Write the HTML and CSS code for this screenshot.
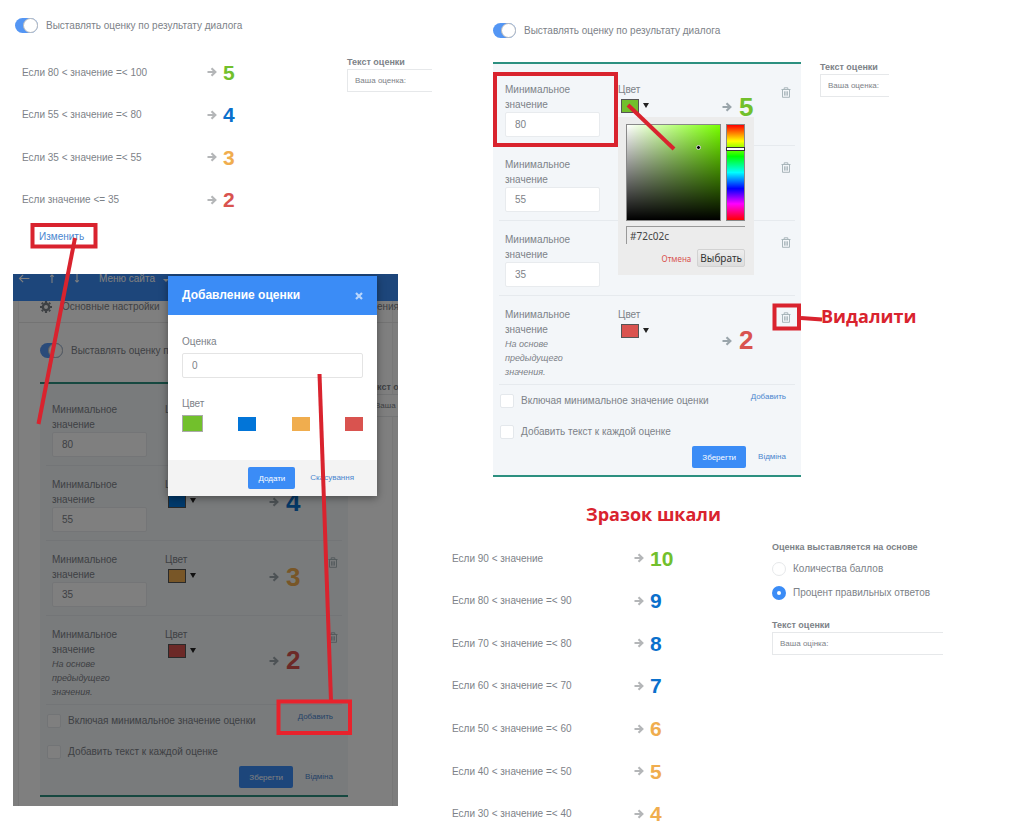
FILE: index.html
```html
<!DOCTYPE html>
<html lang="ru">
<head>
  <meta charset="UTF-8">
  <meta name="viewport" content="width=device-width, initial-scale=1.0">
  <title>Настройка шкалы оценок</title>
  <link rel="stylesheet" href="styles.css">
</head>
<body>

  <!-- Общие иконки -->
  <svg class="sprite" aria-hidden="true">
    <symbol id="arrow" viewBox="0 0 10 10">
      <path d="M0.5 5H8M4.5 1.2L8.4 5L4.5 8.8" fill="none" stroke="currentColor" stroke-width="2.1"/>
    </symbol>
    <symbol id="trash" viewBox="0 0 10 11">
      <path d="M0.5 2.5H9.5M3.2 2.2V0.8H6.8V2.2M1.5 2.5V10.3H8.5V2.5M3.6 4.3V8.6M5 4.3V8.6M6.4 4.3V8.6" fill="none" stroke="currentColor" stroke-width="1"/>
    </symbol>
  </svg>

  <main class="page">
    <div class="left">

      <!-- Текущая шкала -->
      <section class="summary">
        <div class="summary-main">
          <label class="toggle"><input type="checkbox" checked>Выставлять оценку по результату диалога</label>
          <ul class="scale">
            <li><span>Если 80 &lt; значение =&lt; 100</span><svg class="arrow"><use href="#arrow"/></svg><b class="green">5</b></li>
            <li><span>Если 55 &lt; значение =&lt; 80</span><svg class="arrow"><use href="#arrow"/></svg><b class="blue">4</b></li>
            <li><span>Если 35 &lt; значение =&lt; 55</span><svg class="arrow"><use href="#arrow"/></svg><b class="orange">3</b></li>
            <li><span>Если значение &lt;= 35</span><svg class="arrow"><use href="#arrow"/></svg><b class="red">2</b></li>
          </ul>
          <a class="change" href="#">Изменить</a>
        </div>
        <div class="field">
          <label for="text1">Текст оценки</label>
          <input type="text" id="text1" value="Ваша оценка:">
        </div>
      </section>

      <!-- Окно добавления оценки поверх затемнённой страницы -->
      <section class="shot">
        <header class="topbar">
          <svg class="back" viewBox="0 0 12 10"><path d="M12 5H1M5 1L1 5L5 9" fill="none" stroke="currentColor" stroke-width="1.3"/></svg>
          <svg class="updown" viewBox="0 0 6 10"><path d="M3 10V1M1 3L3 1L5 3" fill="none" stroke="currentColor" stroke-width="1.2"/></svg>
          <svg class="updown" viewBox="0 0 6 10"><path d="M3 0V9M1 7L3 9L5 7" fill="none" stroke="currentColor" stroke-width="1.2"/></svg>
          <span class="menu">Меню сайта <i class="caret"></i></span>
        </header>
        <div class="panel">
          <nav class="tabs">
            <svg class="gear" viewBox="0 0 12 12"><circle cx="6" cy="6" r="3.2" fill="none" stroke="currentColor" stroke-width="2.4"/><path d="M6 0V2M6 10V12M0 6H2M10 6H12M1.8 1.8L3 3M9 9L10.2 10.2M1.8 10.2L3 9M9 3L10.2 1.8" stroke="currentColor" stroke-width="2.2"/></svg>
            <span>Основные настройки</span>
            <span class="tab-last">ения</span>
          </nav>
          <label class="toggle"><input type="checkbox" checked>Выставлять оценку по результату</label>
          <div class="editor-row">
            <form class="editor">
              <div class="rule">
                <div class="rule-value"><label for="a80">Минимальное значение</label><input type="text" id="a80" value="80"></div>
                <div class="rule-color"><span>Цвет</span><button type="button" class="pick bg-green" aria-label="Цвет"></button></div>
                <div class="rule-mark"></div>
              </div>
              <div class="rule">
                <div class="rule-value"><label for="a55">Минимальное значение</label><input type="text" id="a55" value="55"></div>
                <div class="rule-color"><span>Цвет</span><button type="button" class="pick bg-blue" aria-label="Цвет"></button></div>
                <div class="rule-mark"><svg class="arrow"><use href="#arrow"/></svg><b class="blue">4</b></div>
              </div>
              <div class="rule">
                <div class="rule-value"><label for="a35">Минимальное значение</label><input type="text" id="a35" value="35"></div>
                <div class="rule-color"><span>Цвет</span><button type="button" class="pick bg-orange" aria-label="Цвет"></button></div>
                <div class="rule-mark"><svg class="arrow"><use href="#arrow"/></svg><b class="orange">3</b></div>
                <button type="button" class="del" aria-label="Удалить"><svg><use href="#trash"/></svg></button>
              </div>
              <div class="rule rule-last">
                <div class="rule-value">Минимальное значение<em>На основе предыдущего значения.</em></div>
                <div class="rule-color"><span>Цвет</span><button type="button" class="pick bg-red" aria-label="Цвет"></button></div>
                <div class="rule-mark"><svg class="arrow"><use href="#arrow"/></svg><b class="red">2</b></div>
                <button type="button" class="del" aria-label="Удалить"><svg><use href="#trash"/></svg></button>
              </div>
              <div class="options">
                <div class="checks">
                  <label><input type="checkbox">Включая минимальное значение оценки</label>
                  <label><input type="checkbox">Добавить текст к каждой оценке</label>
                </div>
                <a class="small-link" href="#">Добавить</a>
              </div>
              <div class="actions">
                <button type="button" class="btn">Зберегти</button>
                <a class="small-link" href="#">Відміна</a>
              </div>
            </form>
            <div class="field">
              <label for="text2">Текст оценки</label>
              <input type="text" id="text2" value="Ваша оценка:">
            </div>
          </div>
        </div>

        <div class="shade"></div>

        <div class="modal" role="dialog" aria-labelledby="modalTitle">
          <div class="modal-head">
            <h2 id="modalTitle">Добавление оценки</h2>
            <button type="button" class="close" aria-label="Закрыть"><svg viewBox="0 0 8 8"><path d="M1 1L7 7M7 1L1 7" stroke="currentColor" stroke-width="2.2"/></svg></button>
          </div>
          <div class="modal-body">
            <label for="mark">Оценка</label>
            <input type="text" id="mark" value="0">
            <span class="modal-label">Цвет</span>
            <div class="swatches">
              <button type="button" class="swatch selected bg-green" aria-label="Зелёный"></button>
              <button type="button" class="swatch bg-blue" aria-label="Синий"></button>
              <button type="button" class="swatch bg-orange" aria-label="Оранжевый"></button>
              <button type="button" class="swatch bg-red" aria-label="Красный"></button>
            </div>
          </div>
          <div class="modal-foot">
            <button type="button" class="btn">Додати</button>
            <a class="small-link" href="#">Скасування</a>
          </div>
        </div>
      </section>
    </div>

    <div class="right">

      <!-- Редактор шкалы с выбором цвета -->
      <section class="edit">
        <label class="toggle"><input type="checkbox" checked>Выставлять оценку по результату диалога</label>
        <div class="editor-row">
          <form class="editor">
            <div class="rule">
              <div class="rule-value"><label for="b80">Минимальное значение</label><input type="text" id="b80" value="80"></div>
              <div class="rule-color">
                <span>Цвет</span><button type="button" class="pick bg-green" aria-label="Цвет"></button>
                <div class="picker">
                  <div class="palette"><i class="dot"></i></div>
                  <div class="hue"><i class="slider"></i></div>
                  <input type="text" class="hex" value="#72c02c" aria-label="Код цвета">
                  <div class="picker-actions">
                    <a href="#">Отмена</a>
                    <button type="button">Выбрать</button>
                  </div>
                </div>
              </div>
              <div class="rule-mark"><svg class="arrow"><use href="#arrow"/></svg><b class="green">5</b></div>
              <button type="button" class="del" aria-label="Удалить"><svg><use href="#trash"/></svg></button>
            </div>
            <div class="rule">
              <div class="rule-value"><label for="b55">Минимальное значение</label><input type="text" id="b55" value="55"></div>
              <div class="rule-color"></div>
              <div class="rule-mark"></div>
              <button type="button" class="del" aria-label="Удалить"><svg><use href="#trash"/></svg></button>
            </div>
            <div class="rule">
              <div class="rule-value"><label for="b35">Минимальное значение</label><input type="text" id="b35" value="35"></div>
              <div class="rule-color"></div>
              <div class="rule-mark"></div>
              <button type="button" class="del" aria-label="Удалить"><svg><use href="#trash"/></svg></button>
            </div>
            <div class="rule rule-last">
              <div class="rule-value">Минимальное значение<em>На основе предыдущего значения.</em></div>
              <div class="rule-color"><span>Цвет</span><button type="button" class="pick bg-red" aria-label="Цвет"></button></div>
              <div class="rule-mark"><svg class="arrow"><use href="#arrow"/></svg><b class="red">2</b></div>
              <button type="button" class="del" aria-label="Удалить"><svg><use href="#trash"/></svg></button>
            </div>
            <div class="options">
              <div class="checks">
                <label><input type="checkbox">Включая минимальное значение оценки</label>
                <label><input type="checkbox">Добавить текст к каждой оценке</label>
              </div>
              <a class="small-link" href="#">Добавить</a>
            </div>
            <div class="actions">
              <button type="button" class="btn">Зберегти</button>
              <a class="small-link" href="#">Відміна</a>
            </div>
          </form>
          <div class="field">
            <label for="text3">Текст оценки</label>
            <input type="text" id="text3" value="Ваша оценка:">
          </div>
        </div>
      </section>

      <!-- Пример шкалы -->
      <section class="sample">
        <h1 class="note">Зразок шкали</h1>
        <div class="sample-row">
          <ul class="scale">
            <li><span>Если 90 &lt; значение</span><svg class="arrow"><use href="#arrow"/></svg><b class="green">10</b></li>
            <li><span>Если 80 &lt; значение =&lt; 90</span><svg class="arrow"><use href="#arrow"/></svg><b class="blue">9</b></li>
            <li><span>Если 70 &lt; значение =&lt; 80</span><svg class="arrow"><use href="#arrow"/></svg><b class="blue">8</b></li>
            <li><span>Если 60 &lt; значение =&lt; 70</span><svg class="arrow"><use href="#arrow"/></svg><b class="blue">7</b></li>
            <li><span>Если 50 &lt; значение =&lt; 60</span><svg class="arrow"><use href="#arrow"/></svg><b class="orange">6</b></li>
            <li><span>Если 40 &lt; значение =&lt; 50</span><svg class="arrow"><use href="#arrow"/></svg><b class="orange">5</b></li>
            <li><span>Если 30 &lt; значение =&lt; 40</span><svg class="arrow"><use href="#arrow"/></svg><b class="orange">4</b></li>
          </ul>
          <div class="basis">
            <fieldset>
              <legend>Оценка выставляется на основе</legend>
              <label><input type="radio" name="basis">Количества баллов</label>
              <label><input type="radio" name="basis" checked>Процент правильных ответов</label>
            </fieldset>
            <div class="field">
              <label for="text4">Текст оценки</label>
              <input type="text" id="text4" value="Ваша оцінка:">
            </div>
          </div>
        </div>
      </section>
    </div>

    <!-- Красные пометки -->
    <svg class="marks" width="1024" height="831" viewBox="0 0 1024 831" fill="none" stroke="#d9232e" stroke-width="4">
      <rect x="32.5" y="225" width="63" height="21.500"/>
      <path d="M75 238L38.500 424"/>
      <path d="M319.500 374L331 701"/>
      <rect x="278.500" y="701.500" width="71.500" height="31.500" stroke="#e8222c"/>
      <rect x="495" y="74" width="121" height="71"/>
      <path d="M628 105L674 149"/>
      <rect x="774.500" y="305.500" width="24.500" height="23"/>
      <path d="M801 318L822 319.500"/>
    </svg>
    <p class="note note-delete">Видалити</p>
  </main>

</body>
</html>
```
FILE: styles.css
```css
*, *::before, *::after {
  margin: 0;
  padding: 0;
  box-sizing: border-box;
}

body {
  background: #fff;
  color: #7d8288;
  font-family: "Liberation Sans", Arial, sans-serif;
  font-size: 10px;
  line-height: 15px;
}

input, button {
  font: inherit;
  color: inherit;
}

button {
  border: none;
  cursor: pointer;
}

a {
  color: #4a86cf;
  text-decoration: none;
}

ul {
  list-style: none;
}

.sprite {
  position: absolute;
  width: 0;
  height: 0;
}

.page {
  position: relative;
  display: grid;
  grid-template-columns: 440px 1fr;
  height: 100vh;
  overflow: hidden;
}

/* Цвета оценок */
.green { color: #72c02c; }
.blue { color: #0a70cc; }
.orange { color: #f0ad4e; }
.red { color: #d9534f; }
.bg-green { background-color: #72c02c; }
.bg-blue { background-color: #0275d8; }
.bg-orange { background-color: #f0ad4e; }
.bg-red { background-color: #d9534f; }

/* Переключатель */
.toggle {
  display: flex;
  align-items: center;
  gap: 8px;
}

.toggle input {
  appearance: none;
  display: flex;
  justify-content: flex-end;
  width: 23px;
  height: 15px;
  border-radius: 8px;
  background: #5496f4;
}

.toggle input::before {
  content: "";
  width: 15px;
  height: 15px;
  border: 1px solid #bbb;
  border-radius: 50%;
  background: #fff;
}

/* Список оценок */
.scale {
  display: grid;
  grid-auto-rows: 1fr;
}

.scale li {
  display: grid;
  grid-template-columns: 1fr 10px 28px;
  column-gap: 6px;
  align-items: center;
}

.scale b {
  font-size: 21px;
}

.arrow {
  width: 10px;
  height: 10px;
  color: #b4b6b8;
}

/* Поле с подписью */
.field {
  display: flex;
  flex-direction: column;
}

.field label {
  font-size: 9px;
  font-weight: bold;
  line-height: 14px;
  white-space: nowrap;
}

.field input {
  width: 100%;
  height: 23px;
  padding: 0 7px;
  border: 1px solid #e6e8ea;
  border-right: none;
  background: #fff;
  font-size: 8px;
}

.summary {
  display: flex;
  justify-content: space-between;
  height: 274px;
  padding: 18px 8px 0 15px;
}

.summary-main {
  width: 236px;
}

.summary .scale {
  height: 170px;
  margin: 18px 0 8px 7px;
}

.summary .field {
  width: 85px;
  padding-top: 37px;
}

.change {
  display: inline-block;
  margin-left: 24px;
}

/* Страница под окном */
.shot {
  position: relative;
  width: 385px;
  margin-left: 13px;
  overflow: hidden;
  background: #fafafa;
}

.topbar {
  display: flex;
  gap: 19px;
  height: 27px;
  padding-left: 5px;
  background: #3b8cf6;
  color: #fff;
  line-height: 9px;
}

.back {
  width: 12px;
  height: 9px;
}

.updown {
  width: 6px;
  height: 9px;
}

.caret {
  display: inline-block;
  margin-left: 5px;
  border: 3px solid transparent;
  border-top-color: #fff;
  border-bottom: none;
}

.panel {
  margin: 0 5px;
  padding-bottom: 9px;
  border: solid #eee;
  border-width: 0 1px;
  background: #fff;
}

.tabs {
  display: flex;
  align-items: flex-start;
  height: 22px;
  gap: 10px;
  margin: 0 -7px 20px 0;
  padding-left: 21px;
  border-bottom: 1px solid #e6e6e6;
  line-height: 11px;
}

.tab-last {
  margin-left: auto;
}

.gear {
  width: 12px;
  height: 12px;
}

.panel .toggle {
  margin: 0 0 24px 21px;
}

.panel .editor-row {
  padding-left: 21px;
}

/* Редактор */
.editor-row {
  display: flex;
  align-items: flex-start;
  gap: 19px;
}

.editor {
  flex: 0 0 308px;
  padding: 7px 6px;
  border: solid #2c9080;
  border-width: 2px 0;
  background: #f3f6f9;
}

.editor-row .field {
  width: 69px;
  flex-shrink: 0;
}

.edit .field, .panel .field {
  margin-top: -2px;
}

.rule {
  display: grid;
  grid-template-columns: 95px 96px 1fr 10px;
  padding: 11px 4px 8px 6px;
  border-bottom: 1px solid #e6eaee;
}

.rule-last {
  padding-bottom: 5px;
}

.rule-value {
  padding-right: 10px;
}

.rule-value label {
  display: block;
}

.rule-value input {
  display: block;
  width: 95px;
  height: 25px;
  padding: 0 9px;
  border: 1px solid #e8ebee;
  border-radius: 2px;
  background: #fff;
}

.rule-value em {
  display: block;
  width: 70px;
  font-size: 9px;
  line-height: 14px;
}

.rule-color {
  position: relative;
  margin-left: 18px;
}

.rule-color span {
  display: block;
}

.pick {
  display: block;
  position: relative;
  width: 18px;
  height: 14px;
  margin: 2px 0 0 3px;
  border: 1px solid #555;
}

.pick::after {
  content: "";
  position: absolute;
  left: 21px;
  top: 3px;
  border: 3px solid transparent;
  border-top: 5px solid #222;
  border-bottom: none;
}

.rule-mark {
  display: flex;
  align-items: center;
  gap: 7px;
  padding: 0 0 5px 26px;
}

.rule-mark .arrow {
  color: #9aa5ab;
}

.rule-mark b {
  font-size: 26px;
}

.del {
  align-self: start;
  width: 10px;
  height: 11px;
  margin-top: 5px;
  background: none;
  color: #a9b6bb;
}

.del svg {
  display: block;
  width: 10px;
  height: 11px;
}

.options {
  display: flex;
  justify-content: space-between;
  padding: 8px 9px 7px 1px;
}

.checks {
  display: flex;
  flex-direction: column;
  gap: 16px;
}

.checks label {
  display: flex;
  align-items: center;
  gap: 7px;
}

.checks input {
  appearance: none;
  width: 14px;
  height: 14px;
  border: 1px solid #e4e8ec;
  border-radius: 2px;
  background: #fff;
}

.small-link {
  font-size: 8px;
  line-height: 8px;
}

.actions {
  display: flex;
  justify-content: flex-end;
  align-items: center;
  gap: 12px;
  padding-right: 9px;
}

.btn {
  height: 22px;
  padding: 0 10px;
  border-radius: 2px;
  background: #3b8cf6;
  color: #fff;
  font-size: 8px;
}

/* Выбор цвета */
.picker {
  position: absolute;
  z-index: 2;
  left: 0;
  top: 35px;
  display: grid;
  grid-template-columns: 95px 19px;
  gap: 5px;
  width: 136px;
  padding: 7px 8px 8px;
  background: #ececec;
  font-family: "Noto Sans", sans-serif;
}

.palette, .hue {
  position: relative;
  height: 97px;
  border: 1px solid #888;
}

.palette {
  background: linear-gradient(to top, #000, transparent), linear-gradient(to right, #fff, #78ff00);
}

.hue {
  background: linear-gradient(#f00, #ff0 17%, #0f0 33%, #0ff 50%, #00f 67%, #f0f 83%, #f00);
}

.dot {
  position: absolute;
  left: 69px;
  top: 20px;
  width: 5px;
  height: 5px;
  border: 1px solid #ddd;
  border-radius: 50%;
  background: #000;
}

.slider {
  position: absolute;
  left: -1px;
  right: -1px;
  top: 22px;
  height: 4px;
  border: 1px solid #333;
  background: #fff;
}

.hex {
  grid-column: 1 / -1;
  height: 18px;
  padding-left: 3px;
  border: solid #999;
  border-width: 1px 0 0 1px;
  background: none;
  color: #444;
}

.picker-actions {
  grid-column: 1 / -1;
  display: flex;
  justify-content: flex-end;
  align-items: center;
  gap: 6px;
}

.picker-actions a {
  color: #d9534f;
  font-size: 8px;
}

.picker-actions button {
  height: 18px;
  padding: 0 2px;
  border: 1px solid #d2d2d2;
  border-radius: 2px;
  background: linear-gradient(#eee, #ddd);
  color: #333;
  line-height: 15px;
}

/* Затемнение и окно */
.shade {
  position: absolute;
  inset: 0;
  background: rgba(0, 0, 0, 0.5);
}

.modal {
  position: absolute;
  left: 155px;
  top: 2px;
  width: 209px;
  background: #fff;
  box-shadow: 0 2px 8px rgba(0, 0, 0, 0.4);
}

.modal-head {
  display: flex;
  justify-content: space-between;
  align-items: center;
  height: 39px;
  padding: 0 14px;
  background: #3b8cf6;
  color: #fff;
}

.modal-head h2 {
  font-size: 12px;
  font-weight: bold;
}

.close {
  width: 8px;
  height: 8px;
  background: none;
  color: #b9d6fc;
}

.close svg {
  display: block;
  width: 8px;
  height: 8px;
}

.modal-body {
  height: 145px;
  padding: 19px 14px;
}

.modal-body label, .modal-label {
  display: block;
}

.modal-body input {
  width: 100%;
  height: 25px;
  margin: 4px 0 18px;
  padding: 0 9px;
  border: 1px solid #e4e4e4;
  border-radius: 2px;
}

.swatches {
  display: flex;
  justify-content: space-between;
  align-items: center;
  padding-top: 4px;
}

.swatch {
  width: 18px;
  height: 14px;
}

.swatch.selected {
  width: 21px;
  height: 17px;
  border: 1px solid #aaa;
}

.modal-foot {
  display: flex;
  justify-content: flex-end;
  align-items: center;
  gap: 15px;
  height: 36px;
  padding-right: 23px;
  background: #f3f3f3;
}

/* Правая колонка */
.edit {
  padding: 23px 0 0 53px;
}

.edit .toggle {
  margin-bottom: 24px;
}

.sample {
  padding: 26px 0 0 12px;
}

.note {
  color: #d9232e;
  font-family: "Open Sans", "Noto Sans", sans-serif;
  font-size: 18px;
  font-weight: bold;
  line-height: 22px;
}

.sample .note {
  margin: 0 0 12px 134px;
}

.sample-row {
  display: flex;
  gap: 94px;
}

.sample .scale {
  width: 226px;
  height: 298px;
}

.basis {
  width: 171px;
  padding-top: 3px;
}

.basis fieldset {
  display: grid;
  gap: 9px;
  margin-bottom: 18px;
  border: none;
}

.basis legend {
  margin-bottom: 7px;
  font-size: 9px;
  font-weight: bold;
  line-height: 14px;
}

.basis fieldset label {
  display: flex;
  align-items: center;
  gap: 7px;
}

.basis input[type="radio"] {
  appearance: none;
  width: 14px;
  height: 14px;
  border: 1px solid #e6e8ea;
  border-radius: 50%;
  background: #fff;
}

.basis input[type="radio"]:checked {
  border: 5px solid #3b8cf6;
}

.marks {
  position: absolute;
  z-index: 3;
  left: 0;
  top: 0;
  pointer-events: none;
}

.note-delete {
  position: absolute;
  z-index: 3;
  left: 821px;
  top: 305px;
}
```
